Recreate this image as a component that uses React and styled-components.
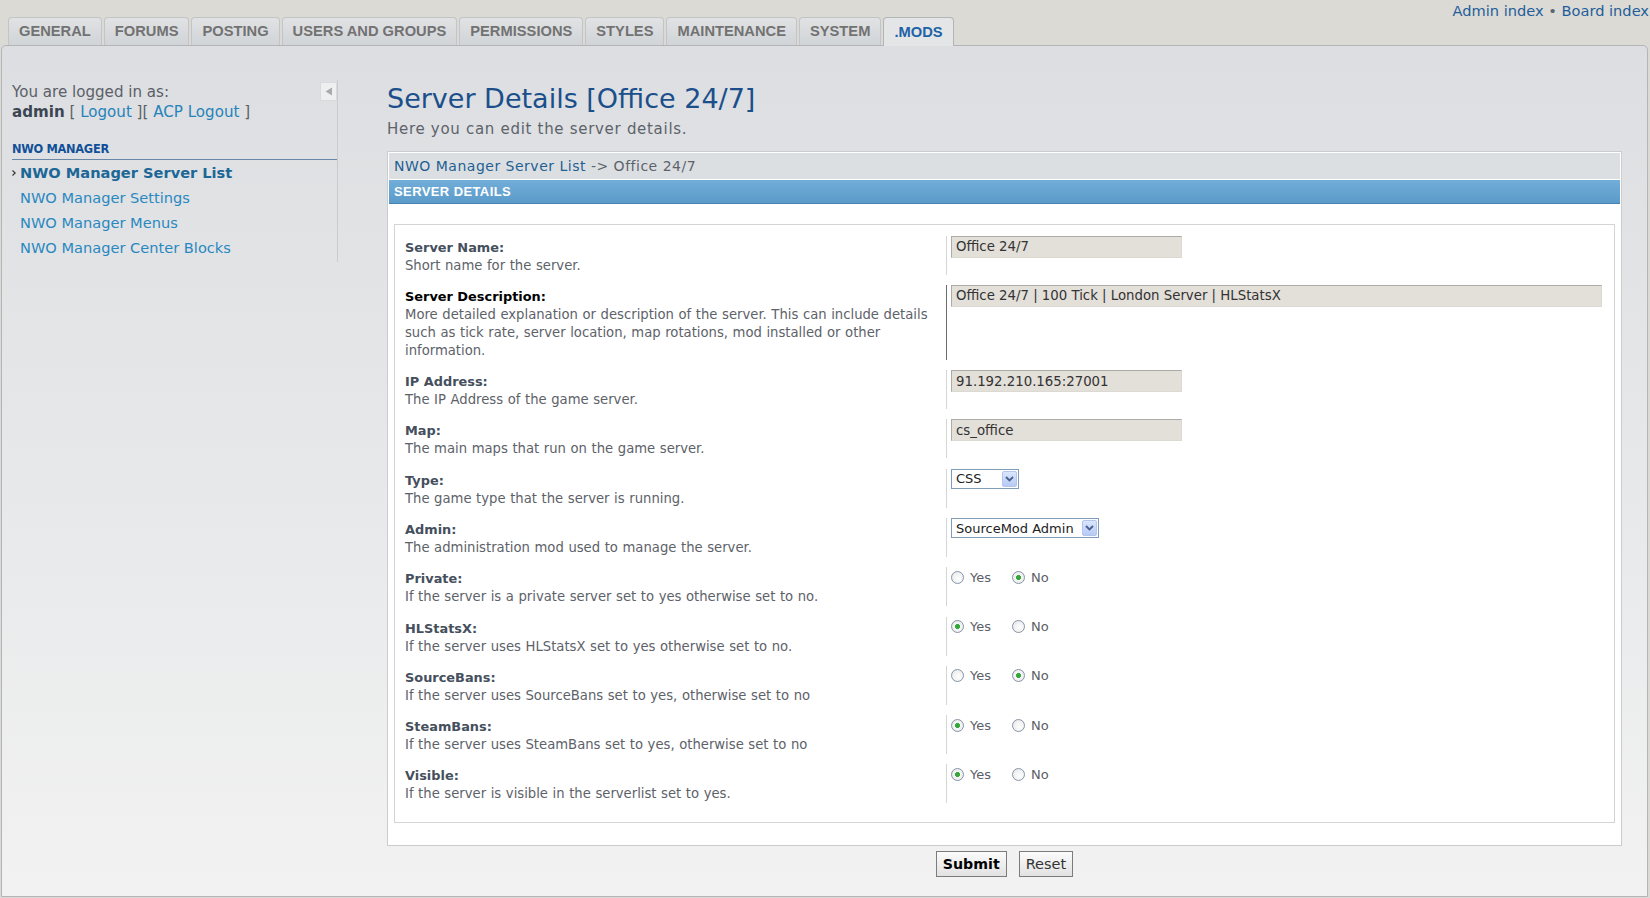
import styled, { createGlobalStyle } from "styled-components";

const GlobalStyle = createGlobalStyle`
  html, body {
    margin: 0;
    padding: 0;
  }
  body {
    background: #dcdad5;
    font-family: "DejaVu Sans", Verdana, sans-serif;
    overflow: hidden;
  }
`;

const tabs = [
  "General",
  "Forums",
  "Posting",
  "Users and groups",
  "Permissions",
  "Styles",
  "Maintenance",
  "System",
  ".MODS",
];

const menuItems = [
  "NWO Manager Server List",
  "NWO Manager Settings",
  "NWO Manager Menus",
  "NWO Manager Center Blocks",
];

const fields = [
  {
    label: "Server Name:",
    explain: "Short name for the server.",
    kind: "text",
    value: "Office 24/7",
  },
  {
    label: "Server Description:",
    explain:
      "More detailed explanation or description of the server. This can include details such as tick rate, server location, map rotations, mod installed or other information.",
    kind: "text",
    value: "Office 24/7 | 100 Tick | London Server | HLStatsX",
    wide: true,
    active: true,
  },
  {
    label: "IP Address:",
    explain: "The IP Address of the game server.",
    kind: "text",
    value: "91.192.210.165:27001",
  },
  {
    label: "Map:",
    explain: "The main maps that run on the game server.",
    kind: "text",
    value: "cs_office",
  },
  {
    label: "Type:",
    explain: "The game type that the server is running.",
    kind: "select",
    value: "CSS",
    width: 68,
  },
  {
    label: "Admin:",
    explain: "The administration mod used to manage the server.",
    kind: "select",
    value: "SourceMod Admin",
    width: 148,
  },
  {
    label: "Private:",
    explain: "If the server is a private server set to yes otherwise set to no.",
    kind: "radio",
    name: "private",
    yes: false,
  },
  {
    label: "HLStatsX:",
    explain: "If the server uses HLStatsX set to yes otherwise set to no.",
    kind: "radio",
    name: "hlstatsx",
    yes: true,
  },
  {
    label: "SourceBans:",
    explain: "If the server uses SourceBans set to yes, otherwise set to no",
    kind: "radio",
    name: "sourcebans",
    yes: false,
  },
  {
    label: "SteamBans:",
    explain: "If the server uses SteamBans set to yes, otherwise set to no",
    kind: "radio",
    name: "steambans",
    yes: true,
  },
  {
    label: "Visible:",
    explain: "If the server is visible in the serverlist set to yes.",
    kind: "radio",
    name: "visible",
    yes: true,
  },
];

function FieldControl({ field }) {
  if (field.kind === "text") {
    return <TextInput type="text" defaultValue={field.value} $wide={field.wide} />;
  }
  if (field.kind === "select") {
    return (
      <SelectBox $width={field.width}>
        <SelectControl defaultValue={field.value}>
          <option>{field.value}</option>
        </SelectControl>
        <SelectArrow>
          <svg width="9" height="6" viewBox="0 0 9 6">
            <path d="M1 1 L4.5 4.5 L8 1" fill="none" stroke="#4a5f8c" strokeWidth="1.8" />
          </svg>
        </SelectArrow>
      </SelectBox>
    );
  }
  return (
    <RadioGroup>
      <RadioLabel>
        <Radio type="radio" name={field.name} defaultChecked={field.yes} />
        Yes
      </RadioLabel>
      <RadioLabel>
        <Radio type="radio" name={field.name} defaultChecked={!field.yes} />
        No
      </RadioLabel>
    </RadioGroup>
  );
}

export default function App() {
  return (
    <>
      <GlobalStyle />
      <Header>
        <Tabs>
          {tabs.map((tab) => (
            <Tab key={tab} $active={tab === ".MODS"}>
              {tab}
            </Tab>
          ))}
        </Tabs>
        <TopLinks>
          <TopLink>Admin index</TopLink> <Bullet>•</Bullet> <TopLink>Board index</TopLink>
        </TopLinks>
      </Header>

      <Panel>
        <Sidebar>
          <LoginRow>
            <LoginText>
              You are logged in as:
              <br />
              <strong>admin</strong> [ <SideLink>Logout</SideLink> ][ <SideLink>ACP Logout</SideLink> ]
            </LoginText>
            <CollapseButton>
              <svg width="8" height="9" viewBox="0 0 8 9">
                <polygon points="7,0.5 7,8.5 0.5,4.5" fill="#a7abb0" />
              </svg>
            </CollapseButton>
          </LoginRow>
          <MenuHeading>NWO MANAGER</MenuHeading>
          <Menu>
            {menuItems.map((item, i) => (
              <MenuItem key={item} $active={i === 0}>
                <Marker>
                  {i === 0 && (
                    <svg width="4" height="6" viewBox="0 0 4 6">
                      <path d="M0.5 0.5 L3.2 3 L0.5 5.5" fill="none" stroke="#333" strokeWidth="1.1" />
                    </svg>
                  )}
                </Marker>
                {item}
              </MenuItem>
            ))}
          </Menu>
        </Sidebar>

        <Main>
          <Title>Server Details [Office 24/7]</Title>
          <Intro>Here you can edit the server details.</Intro>

          <FormBox>
            <Breadcrumb>
              <CrumbLink>NWO Manager Server List</CrumbLink> -&gt; Office 24/7
            </Breadcrumb>
            <SectionBar>SERVER DETAILS</SectionBar>
            <Fieldset>
              {fields.map((field) => (
                <Row key={field.label}>
                  <Dt>
                    <Label $active={field.active}>{field.label}</Label>
                    <Explain>{field.explain}</Explain>
                  </Dt>
                  <Dd $active={field.active}>
                    <FieldControl field={field} />
                  </Dd>
                </Row>
              ))}
            </Fieldset>
          </FormBox>

          <ButtonBar>
            <Button $primary>Submit</Button>
            <Button>Reset</Button>
          </ButtonBar>
        </Main>
      </Panel>
    </>
  );
}

const Header = styled.header`
  display: flex;
  align-items: flex-end;
  height: 45px;
  box-sizing: border-box;
  padding-left: 8px;
`;

const Tabs = styled.ul`
  display: flex;
  gap: 2px;
  list-style: none;
  margin: 0;
  padding: 0;
`;

const Tab = styled.li`
  position: relative;
  z-index: 1;
  display: flex;
  align-items: center;
  box-sizing: border-box;
  height: ${(p) => (p.$active ? "29px" : "28px")};
  margin-bottom: ${(p) => (p.$active ? "-1px" : "0")};
  padding: 0 10px 1px;
  border: 1px solid ${(p) => (p.$active ? "#b2b4b7" : "#c2c4c7")};
  border-bottom: none;
  border-radius: 4px 4px 0 0;
  background: ${(p) =>
    p.$active ? "#e3e5e7" : "linear-gradient(#e0e2e4, #d1d4d7)"};
  color: ${(p) => (p.$active ? "#1e63a6" : "#727272")};
  font: bold 14.7px "Liberation Sans", Arial, sans-serif;
  text-transform: uppercase;
`;

const TopLinks = styled.div`
  align-self: flex-start;
  margin-left: auto;
  padding: 1px 1px 0 0;
  font-size: 14.6px;
  line-height: 20px;
  color: #1f5e9a;
`;

const TopLink = styled.span`
  color: #1f5e9a;
`;

const Bullet = styled.span`
  color: #5c6670;
`;

const Panel = styled.div`
  display: flex;
  margin: 0 2px 0 1px;
  border: 1px solid #b3b5b8;
  border-radius: 5px 5px 0 0;
  background: linear-gradient(#dcdee1, #f2f2f2);
`;

const Sidebar = styled.aside`
  flex: none;
  align-self: flex-start;
  width: 336px;
  box-sizing: border-box;
  margin-top: 34px;
  padding: 2px 0 2px 10px;
  border-right: 1px solid #c9cbce;
`;

const LoginRow = styled.div`
  display: flex;
  align-items: flex-start;
`;

const LoginText = styled.div`
  font-size: 15.1px;
  line-height: 20px;
  color: #5b6068;

  strong {
    color: #3c4552;
  }
`;

const SideLink = styled.span`
  color: #2583bb;
`;

const CollapseButton = styled.div`
  display: flex;
  align-items: center;
  justify-content: center;
  width: 17px;
  height: 19px;
  box-sizing: border-box;
  margin-left: auto;
  background: #eeeff1;
  border: 1px solid #d8dadd;
`;

const MenuHeading = styled.h3`
  margin: 20px 0 0;
  padding-bottom: 3px;
  border-bottom: 1px solid #6987a6;
  font-size: 11.4px;
  line-height: 14px;
  font-weight: bold;
  color: #115098;
  letter-spacing: -0.3px;
`;

const Menu = styled.ul`
  list-style: none;
  margin: 0;
  padding: 0;
`;

const MenuItem = styled.li`
  display: flex;
  align-items: center;
  font-size: 14.6px;
  line-height: 25px;
  font-weight: ${(p) => (p.$active ? "bold" : "normal")};
  color: ${(p) => (p.$active ? "#1d6796" : "#2a88c0")};
`;

const Marker = styled.span`
  display: flex;
  align-items: center;
  width: 8px;
  flex: none;
`;

const Main = styled.main`
  flex: 1;
  min-width: 0;
  margin: 37px 25px 0 49px;
`;

const Title = styled.h1`
  margin: 0;
  font-size: 27px;
  line-height: 32px;
  font-weight: normal;
  color: #1b4f8b;
`;

const Intro = styled.p`
  margin: 5px 0 0;
  font-size: 15px;
  line-height: 18px;
  letter-spacing: 0.7px;
  color: #5d636b;
`;

const FormBox = styled.div`
  margin-top: 13px;
  padding: 1px;
  border: 1px solid #cacccf;
  background: #fff;
`;

const Breadcrumb = styled.div`
  height: 26px;
  padding-left: 5px;
  background: #dcdfe2;
  font-size: 14px;
  line-height: 26px;
  letter-spacing: 0.5px;
  color: #5d636b;
`;

const CrumbLink = styled.span`
  color: #1f5f92;
`;

const SectionBar = styled.div`
  margin-top: 1px;
  height: 23px;
  padding-left: 5px;
  border-bottom: 1px solid #4a82b0;
  background: linear-gradient(#72add8, #5b9bca);
  color: #fff;
  font: bold 13px "Liberation Sans", Arial, sans-serif;
  line-height: 23px;
  letter-spacing: 0.4px;
`;

const Fieldset = styled.fieldset`
  margin: 20px 5px 21px;
  padding: 7px 10px 12px;
  min-width: 0;
  border: 1px solid #d2d4d6;
  background: #fff;
`;

const Row = styled.div`
  display: flex;
  padding: 3.65px 0 6.65px;
`;

const Dt = styled.div`
  flex: 0 0 541px;
  box-sizing: border-box;
  padding: 3px 10px 0 0;
  font-size: 13.2px;
  line-height: 18px;
  word-spacing: 0.4px;
`;

const Label = styled.span`
  display: block;
  font-size: 12.9px;
  font-weight: bold;
  word-spacing: 0;
  color: ${(p) => (p.$active ? "#000" : "#454f5d")};
`;

const Explain = styled.span`
  display: block;
  color: #5d6269;
`;

const Dd = styled.div`
  flex: 1;
  padding-left: 4px;
  border-left: 1px solid ${(p) => (p.$active ? "#6d6d6d" : "#d5d5d5")};
`;

const TextInput = styled.input`
  display: block;
  box-sizing: border-box;
  width: ${(p) => (p.$wide ? "651px" : "231px")};
  height: 22px;
  padding: 0 4px;
  border: 1px solid;
  border-color: #aeaba6 #dcd8d2 #dcd8d2 #aeaba6;
  background: #e3dfd9;
  font: 13.3px "DejaVu Sans", Verdana, sans-serif;
  color: #333;
  outline: none;
`;

const SelectBox = styled.div`
  display: flex;
  align-items: center;
  box-sizing: border-box;
  width: ${(p) => p.$width}px;
  height: 20px;
  padding: 0 1px 0 0;
  border: 1px solid #7f9db9;
  background: #fff;
`;

const SelectControl = styled.select`
  flex: 1;
  min-width: 0;
  height: 100%;
  padding: 0 0 0 4px;
  border: none;
  background: transparent;
  appearance: none;
  font: 13px "DejaVu Sans", Verdana, sans-serif;
  color: #222;
  outline: none;
`;

const SelectArrow = styled.span`
  display: flex;
  align-items: center;
  justify-content: center;
  width: 15px;
  height: 16px;
  box-sizing: border-box;
  border: 1px solid #b3c5ec;
  border-radius: 2px;
  background: linear-gradient(#dbe6fe, #b6caf5);
`;

const RadioGroup = styled.div`
  display: flex;
  align-items: center;
  gap: 21px;
  height: 20px;
`;

const RadioLabel = styled.label`
  display: flex;
  align-items: center;
  gap: 6px;
  font-size: 13px;
  color: #5b6067;
`;

const Radio = styled.input`
  appearance: none;
  width: 13px;
  height: 13px;
  margin: 0;
  border: 1px solid #8794a4;
  border-radius: 50%;
  background: radial-gradient(circle at 60% 60%, #fff, #e3e5e8);

  &:checked {
    background: radial-gradient(circle, #35a83b 0 2.2px, #f6f6f6 2.8px, #e3e5e8 100%);
  }
`;

const ButtonBar = styled.div`
  display: flex;
  justify-content: center;
  gap: 12px;
  margin-top: 5px;
  padding-bottom: 19px;
`;

const Button = styled.button`
  height: 26px;
  padding: 0 6px;
  border: 1px solid #7c7c7c;
  background: linear-gradient(#fbfbfb, #e2e2e2);
  font-family: "DejaVu Sans", Verdana, sans-serif;
  font-size: ${(p) => (p.$primary ? "14.2px" : "14.5px")};
  font-weight: ${(p) => (p.$primary ? "bold" : "normal")};
  color: ${(p) => (p.$primary ? "#000" : "#333")};
`;
